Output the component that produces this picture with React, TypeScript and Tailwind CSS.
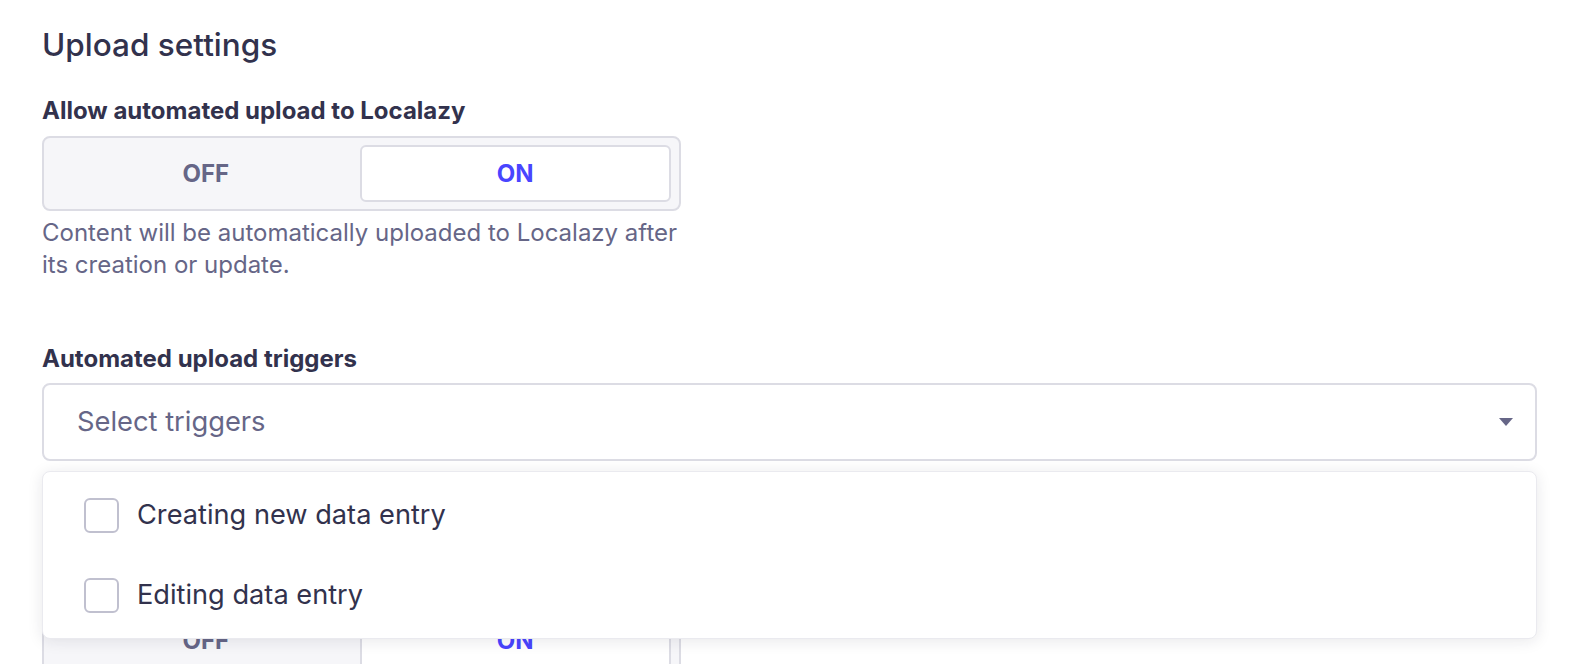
export default function App() {
  return (
    <div
      className="h-[664px] overflow-hidden bg-white pl-[42px] pr-[39px] pt-[25px] text-[#32324d]"
      style={{ fontFamily: 'Inter, "Noto Sans", sans-serif' }}
    >
      <h2 className="text-[31.5px] leading-[40px] font-medium">Upload settings</h2>

      {/* Automated upload toggle */}
      <p className="mt-[30px] text-[24px] leading-[32px] font-bold">Allow automated upload to Localazy</p>
      <Toggle className="mt-[9px]" />
      <p className="mt-[6px] w-[648px] text-[24px] leading-[32px] text-[#666687]">
        Content will be automatically uploaded to Localazy after its creation or update.
      </p>

      {/* Triggers select */}
      <p className="mt-[62px] text-[24px] leading-[32px] font-bold">Automated upload triggers</p>
      <div className="relative mt-[8px]">
        <div className="flex h-[78px] items-center justify-between rounded-[8px] border-2 border-[#dcdce4] bg-white pl-[33px] pr-[22px]">
          <span className="text-[27.3px] text-[#666687]">Select triggers</span>
          <svg width="14" height="8" viewBox="0 0 14 8">
            <path d="M0 0H14L7 8Z" fill="#666687" />
          </svg>
        </div>

        <div className="absolute left-0 right-0 top-[88px] z-10 rounded-[8px] border border-[#eaeaef] bg-white py-[3px] shadow-[0_2px_15px_rgba(33,33,52,0.1)]">
          <Option label="Creating new data entry" />
          <Option label="Editing data entry" />
        </div>
      </div>

      <Toggle className="mt-[142px]" />
    </div>
  );
}

function Toggle({ className }: { className?: string }) {
  return (
    <div
      className={`flex h-[75px] w-[639px] rounded-[8px] border-2 border-[#dcdce4] bg-[#f6f6f9] px-[8px] py-[7px] text-[24px] font-bold ${className ?? ''}`}
    >
      <div className="flex flex-1 items-center justify-center text-[#666687]">OFF</div>
      <div className="flex flex-1 items-center justify-center rounded-[6px] border-2 border-[#dcdce4] bg-white text-[#4945ff]">
        ON
      </div>
    </div>
  );
}

function Option({ label }: { label: string }) {
  return (
    <div className="flex h-[80px] items-center gap-[18px] pl-[41px]">
      <div className="h-[35px] w-[35px] rounded-[6px] border-2 border-[#c0c0cf] bg-white" />
      <span className="text-[27.2px] text-[#32324d]">{label}</span>
    </div>
  );
}
